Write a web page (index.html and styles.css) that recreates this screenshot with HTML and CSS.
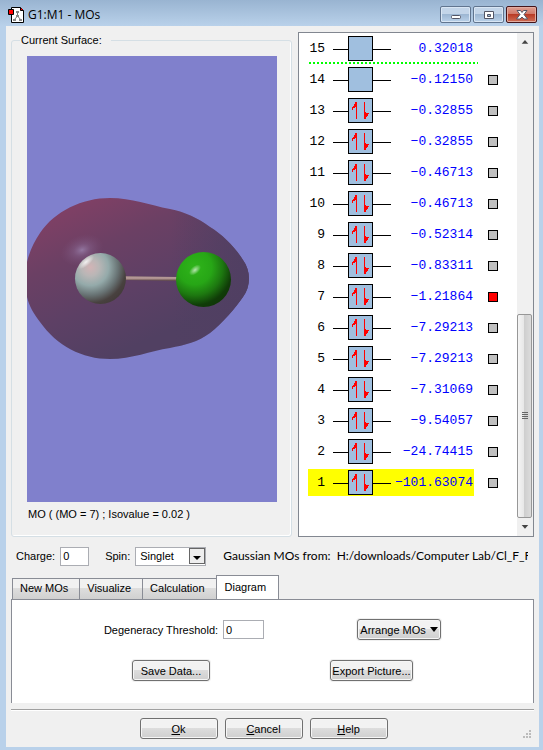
FILE: index.html
```html
<!DOCTYPE html>
<html lang="en">
<head>
<meta charset="utf-8">
<title>G1:M1 - MOs</title>
<link rel="stylesheet" href="styles.css">
</head>
<body>
<svg class="defs" width="0" height="0" aria-hidden="true">
  <symbol id="empty" viewBox="0 0 58 25">
    <path d="M0 13.5H58" stroke="#000"/>
    <rect x="15.500" y=".5" width="24" height="24" fill="#a0bfdf" stroke="#000"/>
  </symbol>
  <symbol id="pair" viewBox="0 0 58 25">
    <path d="M0 13.500H58" stroke="#000"/>
    <rect x="15.500" y=".5" width="24" height="24" fill="#a0bfdf" stroke="#000"/>
    <path d="M23.500 21V4M31.500 4v17" stroke="#f00"/>
    <path d="M23 4v5h-1v1h-2v2h-1V9h1V8h1V6h1V4zM32 21v-7h1v1h3v1h-1v2h-1v1h-1v2z" fill="#f00"/>
  </symbol>
</svg>
<header class="titlebar">
  <svg class="app-icon" width="16" height="16" viewBox="0 0 16 16" aria-hidden="true">
    <path d="M3.500.5h9l3 3v12h-12z" fill="#fff" stroke="#000"/>
    <path d="M12.500.5v3h3" fill="#f00" stroke="#000"/>
    <path d="M9.500 5v4L6 13M9.500 9l3.500 4" fill="none" stroke="#777"/>
    <path d="M8 4h3v2H8zM8 8h3v2H8zM5 12h3v2H5zM11 12h3v2h-3z" fill="#888"/>
    <path d="M.5 2.500h5v5h-5z" fill="#f00" stroke="#000"/>
  </svg>
  <h1>G1:M1 - MOs</h1>
  <div class="window-buttons">
    <button aria-label="Minimize"><svg width="12" height="10" viewBox="0 0 12 10"><rect x="1.500" y="5.500" width="9" height="3" rx="1" fill="#fff" stroke="#535666"/></svg></button>
    <button aria-label="Maximize"><svg width="12" height="10" viewBox="0 0 12 10"><path d="M1.500 1.500h9v7h-9zM4.500 4.500v2h3v-2z" fill="#fff" fill-rule="evenodd" stroke="#535666"/></svg></button>
    <button class="close" aria-label="Close"><svg width="12" height="10" viewBox="0 0 12 10"><path d="M1 .5h3.500L6 2.500 7.500.5H11L8 4.500 11.500 9H8L6 7 4 9H.5L4 4.500z" fill="#fff" stroke="#535666"/></svg></button>
  </div>
</header>

<main class="dialog">
  <div class="views">
    <fieldset class="surface">
      <legend>Current Surface:</legend>
      <svg class="canvas" viewBox="0 0 250 446" role="img" aria-label="Molecular orbital surface">
        <defs>
          <linearGradient id="cloud" x1=".15" y1=".1" x2=".6" y2=".85">
            <stop offset="0" stop-color="#7e4065"/><stop offset=".3" stop-color="#6b4064"/>
            <stop offset=".65" stop-color="#5d4065"/><stop offset="1" stop-color="#514062"/>
          </linearGradient>
          <linearGradient id="shade" x1=".65" y1="0" x2="1" y2="0">
            <stop offset="0" stop-color="#503f62" stop-opacity="0"/><stop offset="1" stop-color="#503f62"/>
          </linearGradient>
          <radialGradient id="glow">
            <stop offset="0" stop-color="#9a80ab" stop-opacity=".85"/><stop offset=".4" stop-color="#85638d" stop-opacity=".5"/>
            <stop offset="1" stop-color="#7a5078" stop-opacity="0"/>
          </radialGradient>
          <radialGradient id="white" cx=".3" cy=".28" r=".78">
            <stop offset="0" stop-color="#d2b4b6"/><stop offset=".22" stop-color="#b9b6b6"/>
            <stop offset=".46" stop-color="#94aaaa"/><stop offset=".7" stop-color="#687374"/>
            <stop offset=".9" stop-color="#48413f"/><stop offset="1" stop-color="#443d3b"/>
          </radialGradient>
          <radialGradient id="spot">
            <stop offset="0" stop-color="#fff"/><stop offset="1" stop-color="#fff" stop-opacity="0"/>
          </radialGradient>
          <radialGradient id="green" cx=".34" cy=".28" r=".78">
            <stop offset="0" stop-color="#2fb51a"/><stop offset=".4" stop-color="#27a616"/>
            <stop offset=".65" stop-color="#1d7810"/><stop offset=".88" stop-color="#103c08"/>
            <stop offset="1" stop-color="#103607"/>
          </radialGradient>
          <linearGradient id="bond" x2="0" y2="1">
            <stop offset="0" stop-color="#8c7474"/><stop offset=".4" stop-color="#c0a3a0"/><stop offset="1" stop-color="#57413f"/>
          </linearGradient>
          <path id="blob" d="M0 206C3 194 7 186 13 177C28 155 55 142 83 142C105 142 122 149 143 153C158 156 171 162 183 171C196 179 208 191 216 204C224 215 224 230 216 241C209 251 196 267 183 277C171 286 158 289 143 292C123 295 105 303 83 303C55 303 30 290 13 266C7 258 2 250 0 241Z"/>
        </defs>
        <use href="#blob" fill="url(#cloud)"/>
        <use href="#blob" fill="url(#shade)"/>
        <ellipse cx="55" cy="194" rx="22" ry="15" fill="url(#glow)" transform="rotate(-20 55 194)"/>
        <path d="M97 220l54 1v4l-54-1z" fill="url(#bond)"/>
        <circle cx="73.500" cy="222.500" r="25.500" fill="url(#white)"/>
        <ellipse cx="59" cy="206" rx="10" ry="4" fill="url(#spot)" opacity=".8" transform="rotate(-40 59 206)"/>
        <circle cx="176.500" cy="223.500" r="27.500" fill="url(#green)"/>
        <ellipse cx="168" cy="214" rx="7" ry="4" fill="url(#spot)" opacity=".65" transform="rotate(-40 168 214)"/>
      </svg>
      <p class="caption">MO ( (MO = 7) ; Isovalue = 0.02 )</p>
    </fieldset>

    <section class="diagram" aria-label="Orbital diagram">
      <table>
        <tr class="gap-line"><th>15</th><td><svg class="orb"><use href="#empty"/></svg></td><td class="energy">0.32018</td><td></td></tr>
        <tr><th>14</th><td><svg class="orb"><use href="#empty"/></svg></td><td class="energy">−0.12150</td><td><input type="checkbox" aria-label="MO 14"></td></tr>
        <tr><th>13</th><td><svg class="orb"><use href="#pair"/></svg></td><td class="energy">−0.32855</td><td><input type="checkbox" aria-label="MO 13"></td></tr>
        <tr><th>12</th><td><svg class="orb"><use href="#pair"/></svg></td><td class="energy">−0.32855</td><td><input type="checkbox" aria-label="MO 12"></td></tr>
        <tr><th>11</th><td><svg class="orb"><use href="#pair"/></svg></td><td class="energy">−0.46713</td><td><input type="checkbox" aria-label="MO 11"></td></tr>
        <tr><th>10</th><td><svg class="orb"><use href="#pair"/></svg></td><td class="energy">−0.46713</td><td><input type="checkbox" aria-label="MO 10"></td></tr>
        <tr><th>9</th><td><svg class="orb"><use href="#pair"/></svg></td><td class="energy">−0.52314</td><td><input type="checkbox" aria-label="MO 9"></td></tr>
        <tr><th>8</th><td><svg class="orb"><use href="#pair"/></svg></td><td class="energy">−0.83311</td><td><input type="checkbox" aria-label="MO 8"></td></tr>
        <tr><th>7</th><td><svg class="orb"><use href="#pair"/></svg></td><td class="energy">−1.21864</td><td><input type="checkbox" aria-label="MO 7" checked></td></tr>
        <tr><th>6</th><td><svg class="orb"><use href="#pair"/></svg></td><td class="energy">−7.29213</td><td><input type="checkbox" aria-label="MO 6"></td></tr>
        <tr><th>5</th><td><svg class="orb"><use href="#pair"/></svg></td><td class="energy">−7.29213</td><td><input type="checkbox" aria-label="MO 5"></td></tr>
        <tr><th>4</th><td><svg class="orb"><use href="#pair"/></svg></td><td class="energy">−7.31069</td><td><input type="checkbox" aria-label="MO 4"></td></tr>
        <tr><th>3</th><td><svg class="orb"><use href="#pair"/></svg></td><td class="energy">−9.54057</td><td><input type="checkbox" aria-label="MO 3"></td></tr>
        <tr><th>2</th><td><svg class="orb"><use href="#pair"/></svg></td><td class="energy">−24.74415</td><td><input type="checkbox" aria-label="MO 2"></td></tr>
        <tr class="selected"><th>1</th><td><svg class="orb"><use href="#pair"/></svg></td><td class="energy">−101.63074</td><td><input type="checkbox" aria-label="MO 1"></td></tr>
      </table>
      <div class="scrollbar" aria-hidden="true">
        <svg class="arrow" viewBox="0 0 16 17"><path d="M5 11l3.500-4 3.500 4z" fill="#444"/></svg>
        <div class="track"></div>
        <div class="thumb"><i></i><i></i><i></i><i></i></div>
        <svg class="arrow" viewBox="0 0 16 17"><path d="M5 7h7l-3.500 4z" fill="#444"/></svg>
      </div>
    </section>
  </div>

  <div class="settings">
    <label for="charge">Charge:</label>
    <input id="charge" class="field charge" type="text" value="0">
    <label for="spin">Spin:</label>
    <div class="spin">
      <select id="spin" class="field"><option>Singlet</option></select>
      <svg width="16" height="16" viewBox="0 0 16 16" aria-hidden="true"><rect x=".5" y=".5" width="15" height="15" fill="#eee" stroke="#666"/><path d="M4 8h8l-4 4z" fill="#000"/></svg>
    </div>
    <p class="source">Gaussian MOs from:&nbsp; H:/downloads/Computer Lab/Cl_F_F</p>
  </div>

  <div class="tabs" role="tablist">
    <button role="tab" aria-selected="false">New MOs</button>
    <button role="tab" aria-selected="false">Visualize</button>
    <button role="tab" aria-selected="false">Calculation</button>
    <button role="tab" aria-selected="true">Diagram</button>
  </div>
  <section class="panel" role="tabpanel">
    <div class="panel-row">
      <div class="threshold">
        <label for="threshold">Degeneracy Threshold:</label>
        <input id="threshold" class="field" type="text" value="0">
      </div>
      <button class="btn arrange">Arrange MOs <svg width="8" height="5" viewBox="0 0 8 5" aria-hidden="true"><path d="M0 0h8L4 5z"/></svg></button>
    </div>
    <div class="panel-row wide">
      <button class="btn">Save Data...</button>
      <button class="btn export">Export Picture...</button>
    </div>
  </section>

  <footer class="actions">
    <button class="btn"><u>O</u>k</button>
    <button class="btn"><u>C</u>ancel</button>
    <button class="btn"><u>H</u>elp</button>
    <svg class="grip" width="9" height="9" viewBox="0 0 9 9" aria-hidden="true"><path d="M6 0h2v2H6zM3 3h2v2H3zM6 3h2v2H6zM0 6h2v2H0zM3 6h2v2H3zM6 6h2v2H6z" fill="#bbb"/></svg>
  </footer>
</main>
</body>
</html>
```
FILE: styles.css
```css
* { box-sizing: border-box; }

body {
  display: flex;
  flex-direction: column;
  min-height: 100vh;
  margin: 0;
  padding: 0 4px 4px 6px;
  background: #b9d1ea;
  color: #000;
  font: 11px/16px "Liberation Sans", Arial, sans-serif;
}

h1, p { margin: 0; font-weight: normal; }
button, input, select { font: inherit; color: inherit; }
svg { display: block; flex: none; }
.defs { position: absolute; }

/* Title bar */
.titlebar {
  display: flex;
  align-items: center;
  height: 26px;
  margin: 0 -4px 0 -6px;
  padding: 3px 6px 0 8px;
  gap: 4px;
  background: linear-gradient(#99b4d1, #b9d1ea);
}
.titlebar h1 { flex: 1; font: 12px/16px "Open Sans", sans-serif; }
.window-buttons { display: flex; gap: 2px; }
.window-buttons button {
  display: flex;
  align-items: center;
  justify-content: center;
  width: 31px;
  height: 17px;
  padding: 0;
  border: 1px solid #61758f;
  border-radius: 2px;
  background: linear-gradient(#c3d5e9 50%, #9db7d3 50%, #b9d1e9);
  box-shadow: inset 0 0 0 1px #d9e6f4;
}
.window-buttons .close {
  border-color: #45151a;
  background: linear-gradient(#dfa093, #cf7566 50%, #b93b26 50%, #cf6e56);
  box-shadow: inset 0 0 0 1px #e3aca0;
}

/* Dialog */
.dialog {
  display: flex;
  flex: 1;
  flex-direction: column;
  padding: 6px 5px 8px;
  background: #f0f0f0;
}
.views {
  display: grid;
  flex: 1;
  grid-template-columns: minmax(0, 281fr) minmax(0, 236fr);
  gap: 6px;
}
.surface {
  display: flex;
  flex-direction: column;
  min-width: 0;
  margin: 0;
  padding: 8px 14px 10px 15px;
  border: 1px solid #d5dfe5;
  border-radius: 3px;
  box-shadow: inset -1px -1px #fff;
}
.surface legend { margin-left: -7px; padding: 0 9px 0 1px; }
.canvas { flex: 1; width: 100%; min-height: 0; background: #8080cc; }
.caption { padding: 4px 1px; }

.diagram {
  display: flex;
  justify-content: space-between;
  border: 1px solid #828790;
  background: #fff;
}
.diagram table {
  align-self: flex-start;
  margin-left: 9px;
  border-spacing: 0;
  font: 13px/16px "Liberation Mono", monospace;
}
.diagram tr { height: 31px; }
.diagram th, .diagram td {
  padding: 0;
  border: solid transparent;
  border-width: 2px 0;
  background-clip: padding-box;
}
.diagram th { width: 25px; padding-right: 8px; font-weight: normal; text-align: right; }
.diagram .energy { width: 83px; padding-right: 1px; color: #00f; text-align: right; }
.diagram td:first-of-type { width: 58px; }
.diagram td:last-child { padding-left: 14px; }
.orb { width: 58px; height: 25px; }
.energy { white-space: nowrap; }
.gap-line {
  background: repeating-linear-gradient(90deg, #0f0 0 2px, transparent 2px 4px) 1px 100% / 169px 2px no-repeat;
}
.selected th, .selected td:not(:last-child) { background-color: #ff0; }
.diagram input {
  display: block;
  width: 10px;
  height: 10px;
  margin: 0;
  border: 1px solid #000;
  background: #c0c0c0;
  appearance: none;
}
.diagram input:checked { background: #f00; }

.scrollbar {
  display: flex;
  flex-direction: column;
  width: 16px;
  padding-right: 1px;
  padding-bottom: 1px;
  background: #f0f0f0;
}
.arrow { height: 17px; }
.track { flex: 265; }
.thumb {
  display: flex;
  flex: 203;
  flex-direction: column;
  align-items: center;
  justify-content: center;
  gap: 1px;
  border: 1px solid #979797;
  border-radius: 2px;
  background: linear-gradient(90deg, #f5f5f5, #e6e6e6 50%, #cfcfcf 50%, #dcdcdc);
}
.thumb i { width: 6px; height: 1px; background: #666; }

/* Charge and spin */
.settings { display: flex; align-items: center; height: 38px; padding-left: 5px; }
.field {
  height: 19px;
  padding: 0 2px;
  border: 1px solid #abadb3;
  border-radius: 0;
  background: #fff;
}
.charge { width: 29px; margin: 0 16px 0 5px; }
.spin { display: grid; align-items: center; width: 71px; margin: 0 17px 0 5px; }
.spin > * { grid-area: 1 / 1; }
.spin select { width: 100%; padding-left: 4px; appearance: none; }
.spin svg { justify-self: end; margin-right: 1px; pointer-events: none; }
.source {
  flex: 1;
  min-width: 0;
  margin-right: 6px;
  overflow: hidden;
  font: 12px/16px Lato, sans-serif;
  white-space: nowrap;
}

/* Tabs */
.tabs { display: flex; align-items: flex-end; margin-bottom: -1px; padding-left: 1px; }
.tabs button {
  height: 22px;
  margin-right: -1px;
  padding: 0 11px 2px 7px;
  border: 1px solid #898c95;
  background: linear-gradient(#f1f1f1 45%, #dedede 45%, #d0d0d0);
}
.tabs [aria-selected="true"] {
  height: 25px;
  padding: 0 12px 3px 8px;
  border-bottom: 0;
  background: #fff;
}
.panel {
  display: flex;
  flex-direction: column;
  gap: 20px;
  padding: 19px 0 22px;
  border: 1px solid #898c95;
  border-bottom: 0;
  background: #fff;
}
.panel-row { display: flex; align-items: center; justify-content: center; gap: 93px; }
.panel-row.wide { gap: 120px; }
.threshold { display: flex; align-items: center; gap: 5px; }
.threshold input { width: 41px; }
.btn {
  width: 78px;
  height: 21px;
  padding: 0;
  border: 1px solid #707070;
  border-radius: 3px;
  background: linear-gradient(#f2f2f2 48%, #dddddd 48%, #cfcfcf);
  box-shadow: inset 0 0 0 1px #f6f6f6, 0 0 0 1px #f0f0f0;
  white-space: nowrap;
}
.arrange { display: flex; align-items: center; justify-content: center; gap: 4px; width: 84px; }
.export { width: 83px; }

.actions {
  display: flex;
  justify-content: center;
  gap: 7px;
  margin-top: 6px;
  padding-top: 8px;
  border-top: 1px solid #a0a0a0;
  box-shadow: inset 0 1px #fff;
}
.actions .btn:first-child { margin-left: auto; }
.actions .grip { align-self: flex-end; margin: 0 2px 0 auto; }
```
